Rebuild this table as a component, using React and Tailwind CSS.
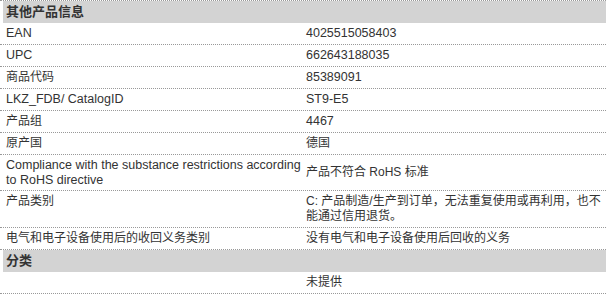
import React from 'react';

const rows1 = [
  { label: 'EAN', value: '4025515058403', latin: true, latinValue: true },
  { label: 'UPC', value: '662643188035', latin: true, latinValue: true },
  { label: '商品代码', value: '85389091', latinValue: true },
  { label: 'LKZ_FDB/ CatalogID', value: 'ST9-E5', latin: true, latinValue: true },
  { label: '产品组', value: '4467', latinValue: true },
  { label: '原产国', value: '德国' },
  {
    label: 'Compliance with the substance restrictions according to RoHS directive',
    value: '产品不符合 RoHS 标准',
    latin: true,
    middle: true,
  },
  { label: '产品类别', value: 'C: 产品制造/生产到订单，无法重复使用或再利用，也不能通过信用退货。' },
  { label: '电气和电子设备使用后的收回义务类别', value: '没有电气和电子设备使用后回收的义务' },
];

const SectionHeader = ({ title }) => (
  <div className="ml-[3px] h-[22px] bg-[#d3d3d3] flex items-center pl-[3px] text-[13px] font-bold text-[#333]">
    {title}
  </div>
);

const Row = ({ label, value, latin, latinValue, middle }) => (
  <div className="grid grid-cols-[303px_303px] border-b border-dotted border-[#999] leading-[15px]">
    <div
      className={`pl-[6px] py-[3px] ${latin ? 'text-[12.5px]' : 'text-[12px]'} ${middle ? 'leading-[14.5px]' : ''}`}
    >
      {label}
    </div>
    <div
      className={`pl-[3px] pr-[3px] py-[3px] ${latinValue ? 'text-[12.5px]' : 'text-[12px]'} ${middle ? 'self-center' : ''}`}
    >
      {value}
    </div>
  </div>
);

export default function App() {
  return (
    <div
      className="w-[606px] h-[294px] bg-white text-[#333] overflow-hidden border-t border-dotted border-[#999]"
      style={{ fontFamily: '"Liberation Sans", "Noto Sans CJK SC", sans-serif' }}
    >
      <SectionHeader title="其他产品信息" />
      {rows1.map((r) => (
        <Row key={r.label} {...r} />
      ))}
      <SectionHeader title="分类" />
      <Row label="" value="未提供" />
    </div>
  );
}
